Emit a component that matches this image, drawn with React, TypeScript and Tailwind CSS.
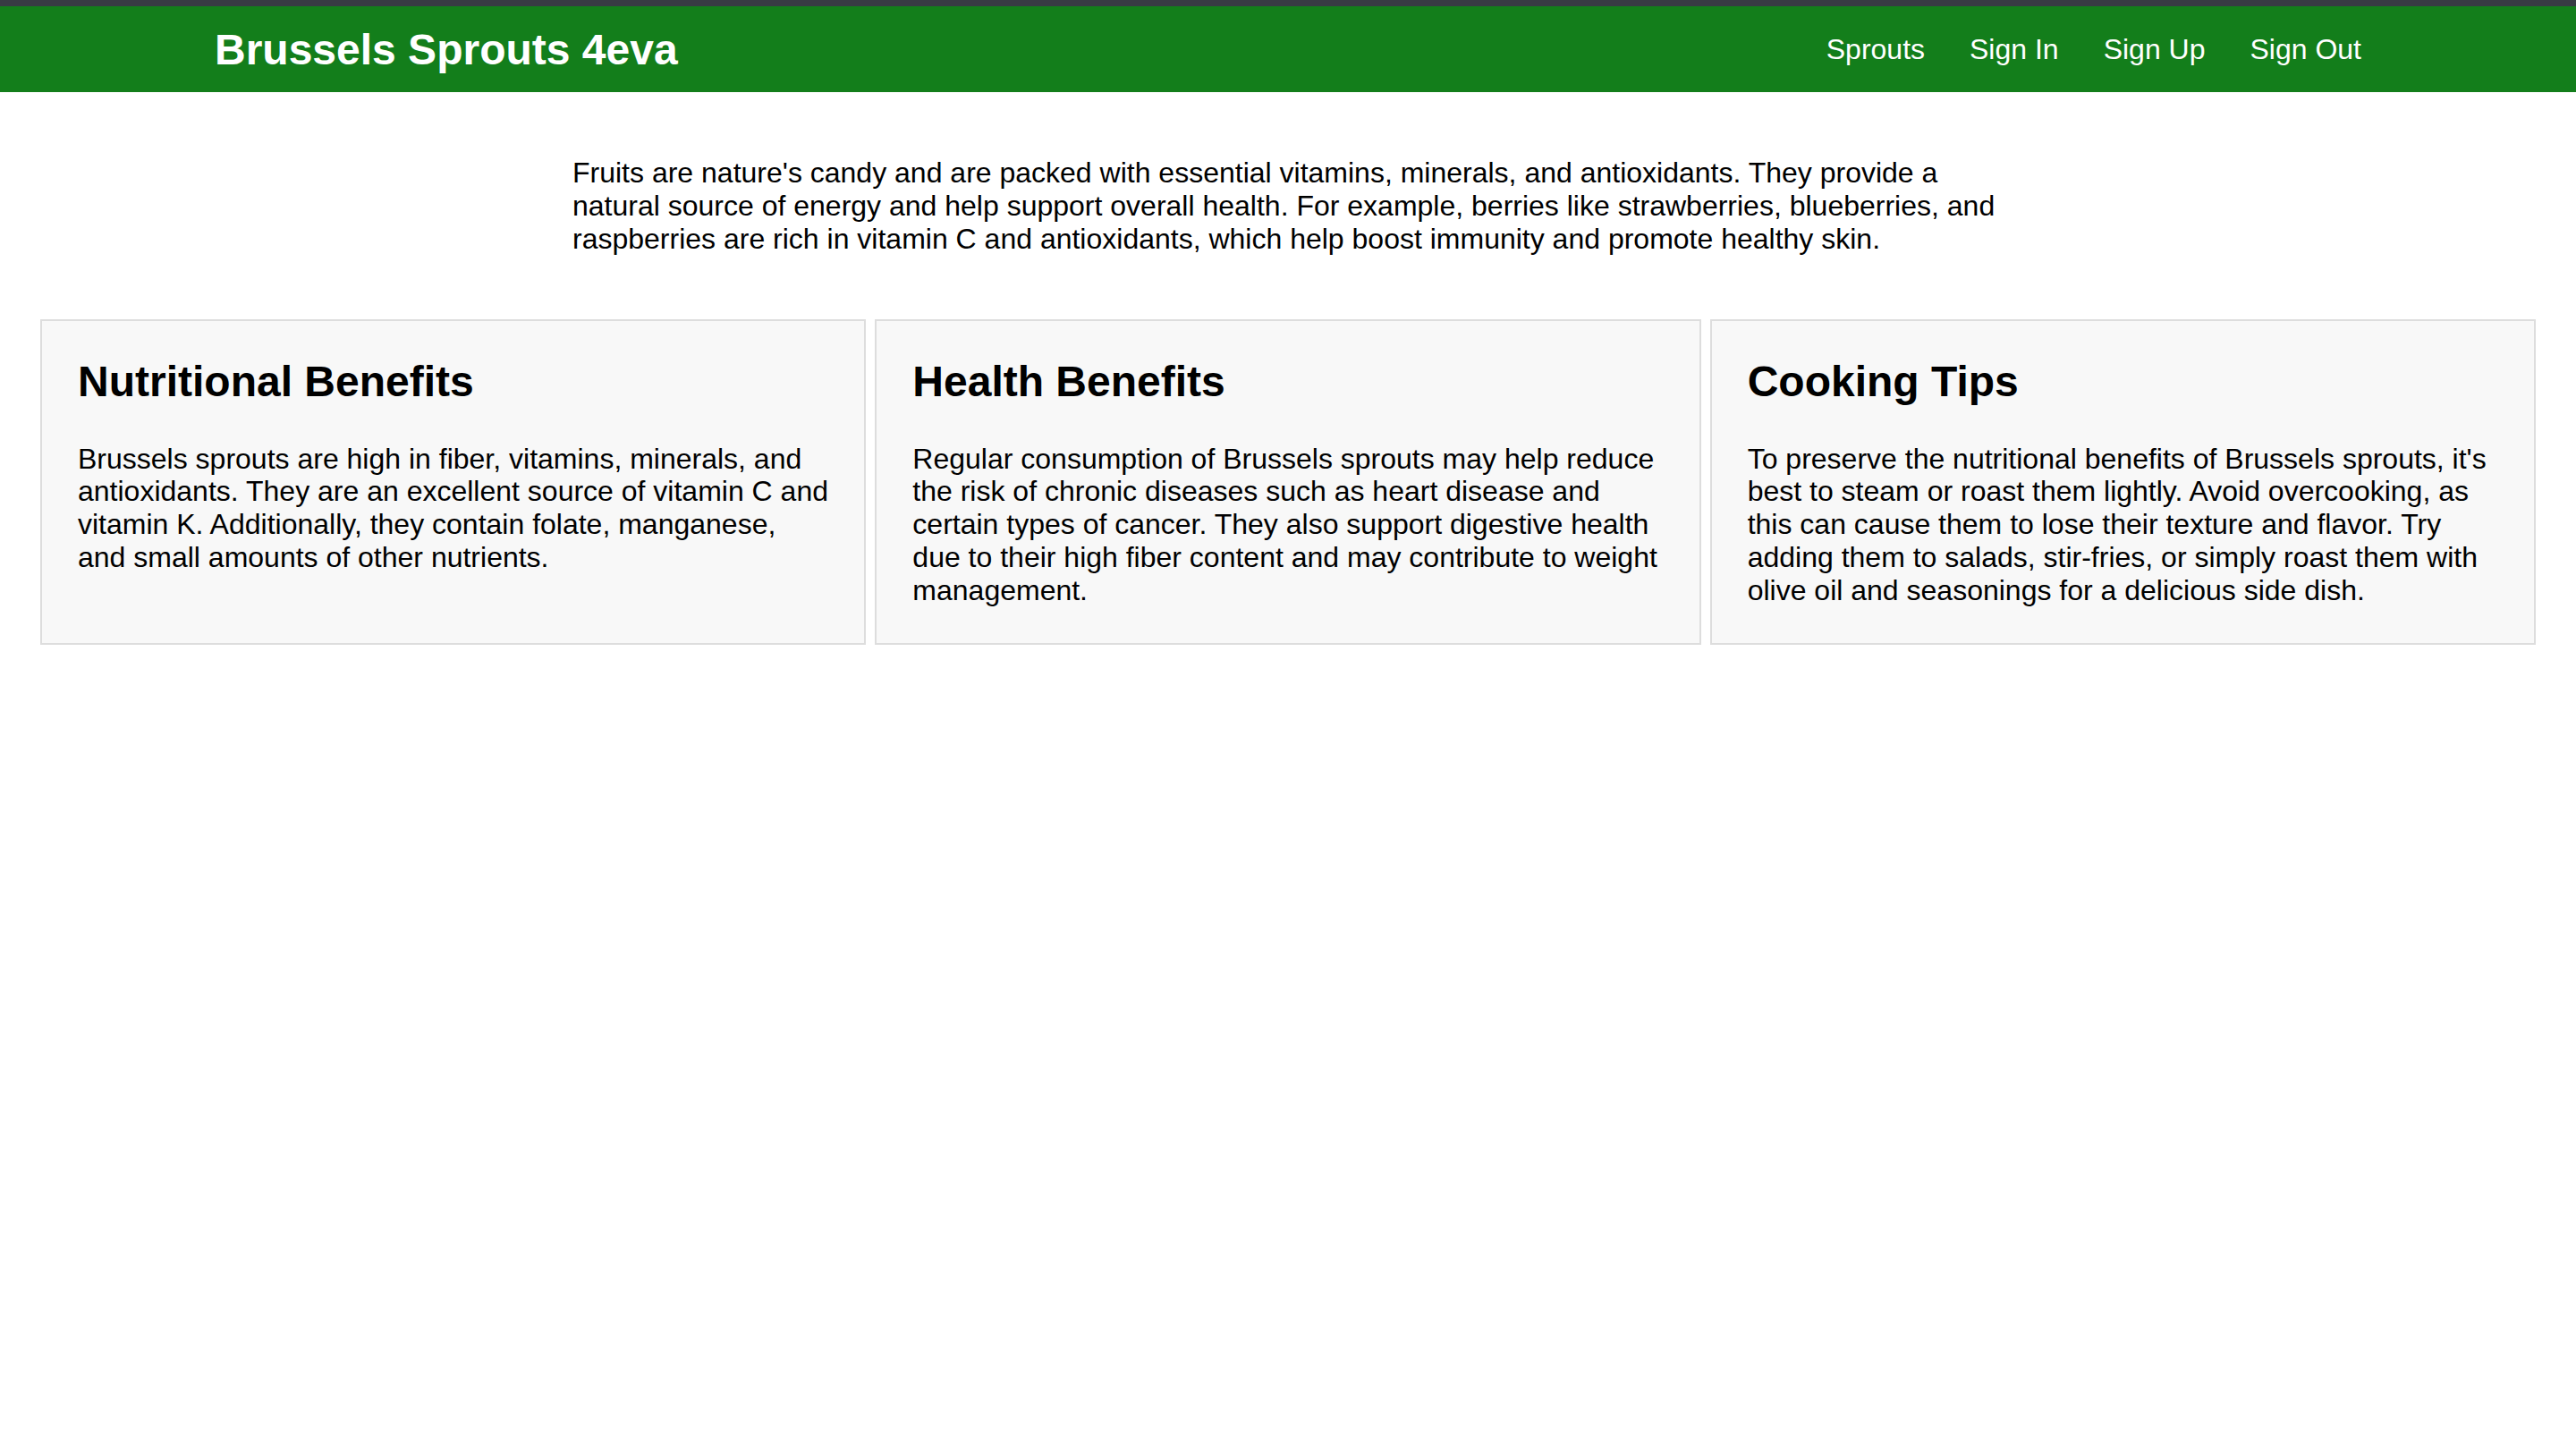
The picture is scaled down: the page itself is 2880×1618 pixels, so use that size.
import React from 'react';

const navLinks = ['Sprouts', 'Sign In', 'Sign Up', 'Sign Out'];

const cards = [
  {
    title: 'Nutritional Benefits',
    body: 'Brussels sprouts are high in fiber, vitamins, minerals, and antioxidants. They are an excellent source of vitamin C and vitamin K. Additionally, they contain folate, manganese, and small amounts of other nutrients.',
  },
  {
    title: 'Health Benefits',
    body: 'Regular consumption of Brussels sprouts may help reduce the risk of chronic diseases such as heart disease and certain types of cancer. They also support digestive health due to their high fiber content and may contribute to weight management.',
  },
  {
    title: 'Cooking Tips',
    body: "To preserve the nutritional benefits of Brussels sprouts, it's best to steam or roast them lightly. Avoid overcooking, as this can cause them to lose their texture and flavor. Try adding them to salads, stir-fries, or simply roast them with olive oil and seasonings for a delicious side dish.",
  },
];

const App: React.FC = () => {
  return (
    <div className="min-h-screen bg-white text-black font-['Liberation_Sans',Arial,sans-serif]">
      <header className="border-t-[7px] border-[#383b44] bg-[#137e1b]">
        <div className="mx-auto flex h-[96px] max-w-[2400px] items-center justify-between">
          <h1 className="mt-[2px] text-[48px] font-bold leading-none text-white">Brussels Sprouts 4eva</h1>
          <nav className="flex items-center gap-[50px]">
            {navLinks.map(link => (
              <a key={link} href="#" className="text-[32px] leading-none text-white">
                {link}
              </a>
            ))}
          </nav>
        </div>
      </header>

      <main>
        <p className="mx-auto mt-[72px] max-w-[1600px] text-[32px] leading-[1.15]">
          Fruits are nature's candy and are packed with essential vitamins, minerals, and antioxidants. They provide a
          natural source of energy and help support overall health. For example, berries like strawberries,
          blueberries, and raspberries are rich in vitamin C and antioxidants, which help boost immunity and promote
          healthy skin.
        </p>

        <section className="mt-[72px] grid grid-cols-3 gap-[10px] px-[45px]">
          {cards.map(card => (
            <div key={card.title} className="border-2 border-[#dddddd] bg-[#f8f8f8] p-[40px]">
              <h2 className="mb-[40px] text-[48px] font-bold leading-[1.15]">{card.title}</h2>
              <p className="text-[32px] leading-[1.15]">{card.body}</p>
            </div>
          ))}
        </section>
      </main>
    </div>
  );
};

export default App;
